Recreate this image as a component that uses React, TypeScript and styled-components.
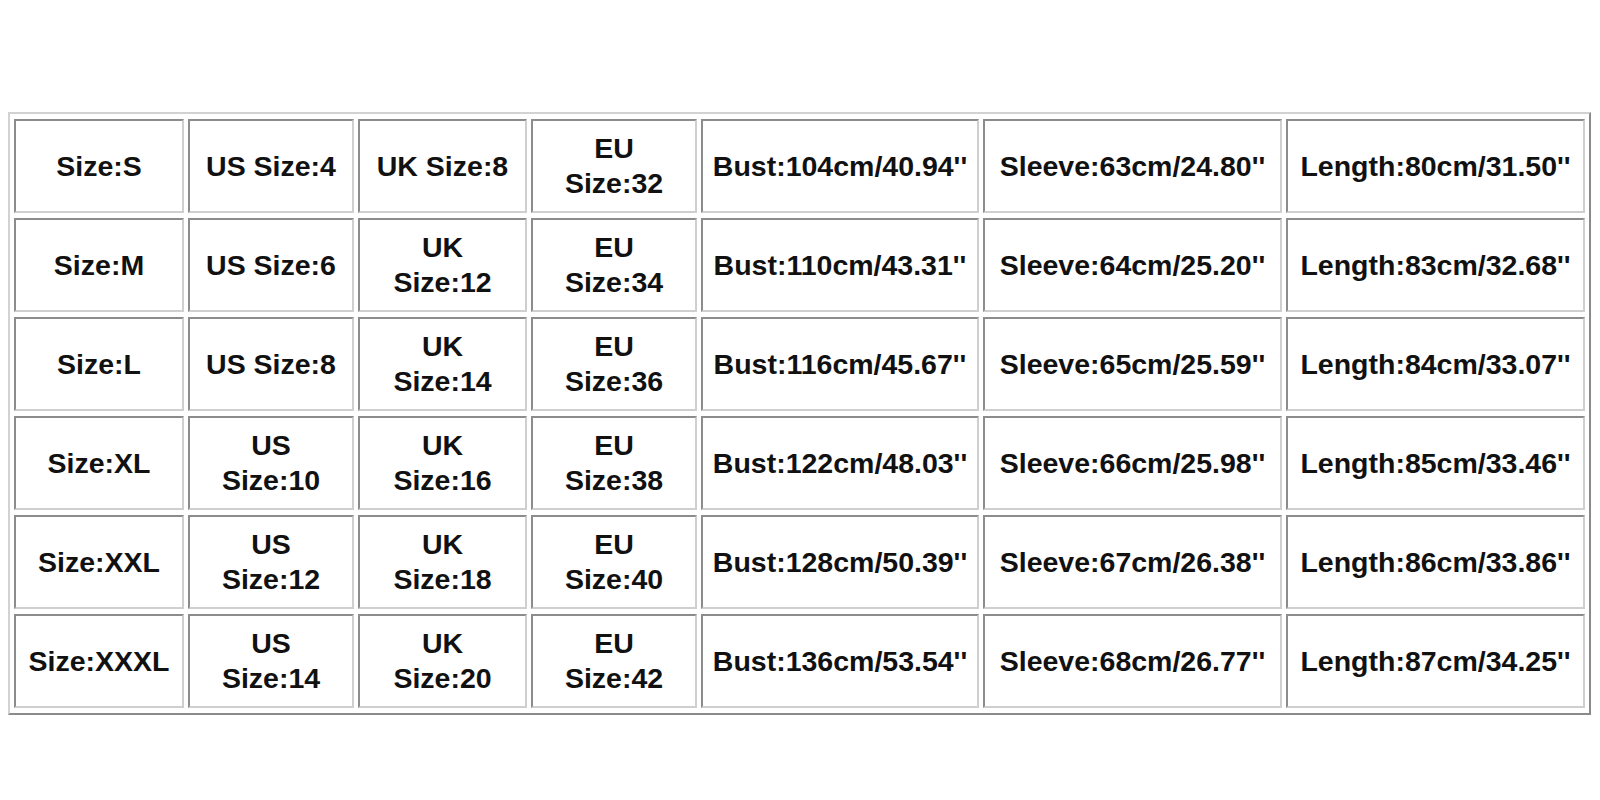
import React from 'react';
import styled, { createGlobalStyle } from 'styled-components';

const GlobalStyle = createGlobalStyle`
  html, body {
    margin: 0;
    padding: 0;
    background: #ffffff;
  }
  body {
    width: 1600px;
    height: 800px;
    overflow: hidden;
    font-family: "Liberation Sans", Arial, sans-serif;
  }
`;

const Page = styled.div`
  padding: 112px 0 0 8px;
`;

const Table = styled.table`
  border-collapse: separate;
  border-spacing: 4px 5px;
  table-layout: fixed;
  border-style: solid;
  border-width: 2px;
  border-color: #d2d2d2 #8a8a8a #8a8a8a #d2d2d2;
`;

const Cell = styled.td<{ $width: number }>`
  box-sizing: border-box;
  width: ${(p) => p.$width}px;
  height: 94px;
  padding: 0;
  border-style: solid;
  border-width: 2px;
  border-color: #8c8c8c #cfcfcf #cfcfcf #8c8c8c;
  text-align: center;
  vertical-align: middle;
  font-family: "Liberation Sans", Arial, sans-serif;
  font-weight: bold;
  font-size: 28.5px;
  line-height: 35px;
  color: #111111;
  white-space: nowrap;
`;

const widths = [170, 166, 169, 166, 278, 299, 299];

const rows: string[][] = [
  ['Size:S', 'US Size:4', 'UK Size:8', 'EU\nSize:32', "Bust:104cm/40.94''", "Sleeve:63cm/24.80''", "Length:80cm/31.50''"],
  ['Size:M', 'US Size:6', 'UK\nSize:12', 'EU\nSize:34', "Bust:110cm/43.31''", "Sleeve:64cm/25.20''", "Length:83cm/32.68''"],
  ['Size:L', 'US Size:8', 'UK\nSize:14', 'EU\nSize:36', "Bust:116cm/45.67''", "Sleeve:65cm/25.59''", "Length:84cm/33.07''"],
  ['Size:XL', 'US\nSize:10', 'UK\nSize:16', 'EU\nSize:38', "Bust:122cm/48.03''", "Sleeve:66cm/25.98''", "Length:85cm/33.46''"],
  ['Size:XXL', 'US\nSize:12', 'UK\nSize:18', 'EU\nSize:40', "Bust:128cm/50.39''", "Sleeve:67cm/26.38''", "Length:86cm/33.86''"],
  ['Size:XXXL', 'US\nSize:14', 'UK\nSize:20', 'EU\nSize:42', "Bust:136cm/53.54''", "Sleeve:68cm/26.77''", "Length:87cm/34.25''"],
];

const App: React.FC = () => {
  return (
    <Page>
      <GlobalStyle />
      <Table>
        <tbody>
          {rows.map((row, r) => (
            <tr key={r}>
              {row.map((text, c) => (
                <Cell key={c} $width={widths[c]}>
                  {text.split('\n').map((line, i) => (
                    <React.Fragment key={i}>
                      {i > 0 && <br />}
                      {line}
                    </React.Fragment>
                  ))}
                </Cell>
              ))}
            </tr>
          ))}
        </tbody>
      </Table>
    </Page>
  );
};

export default App;
